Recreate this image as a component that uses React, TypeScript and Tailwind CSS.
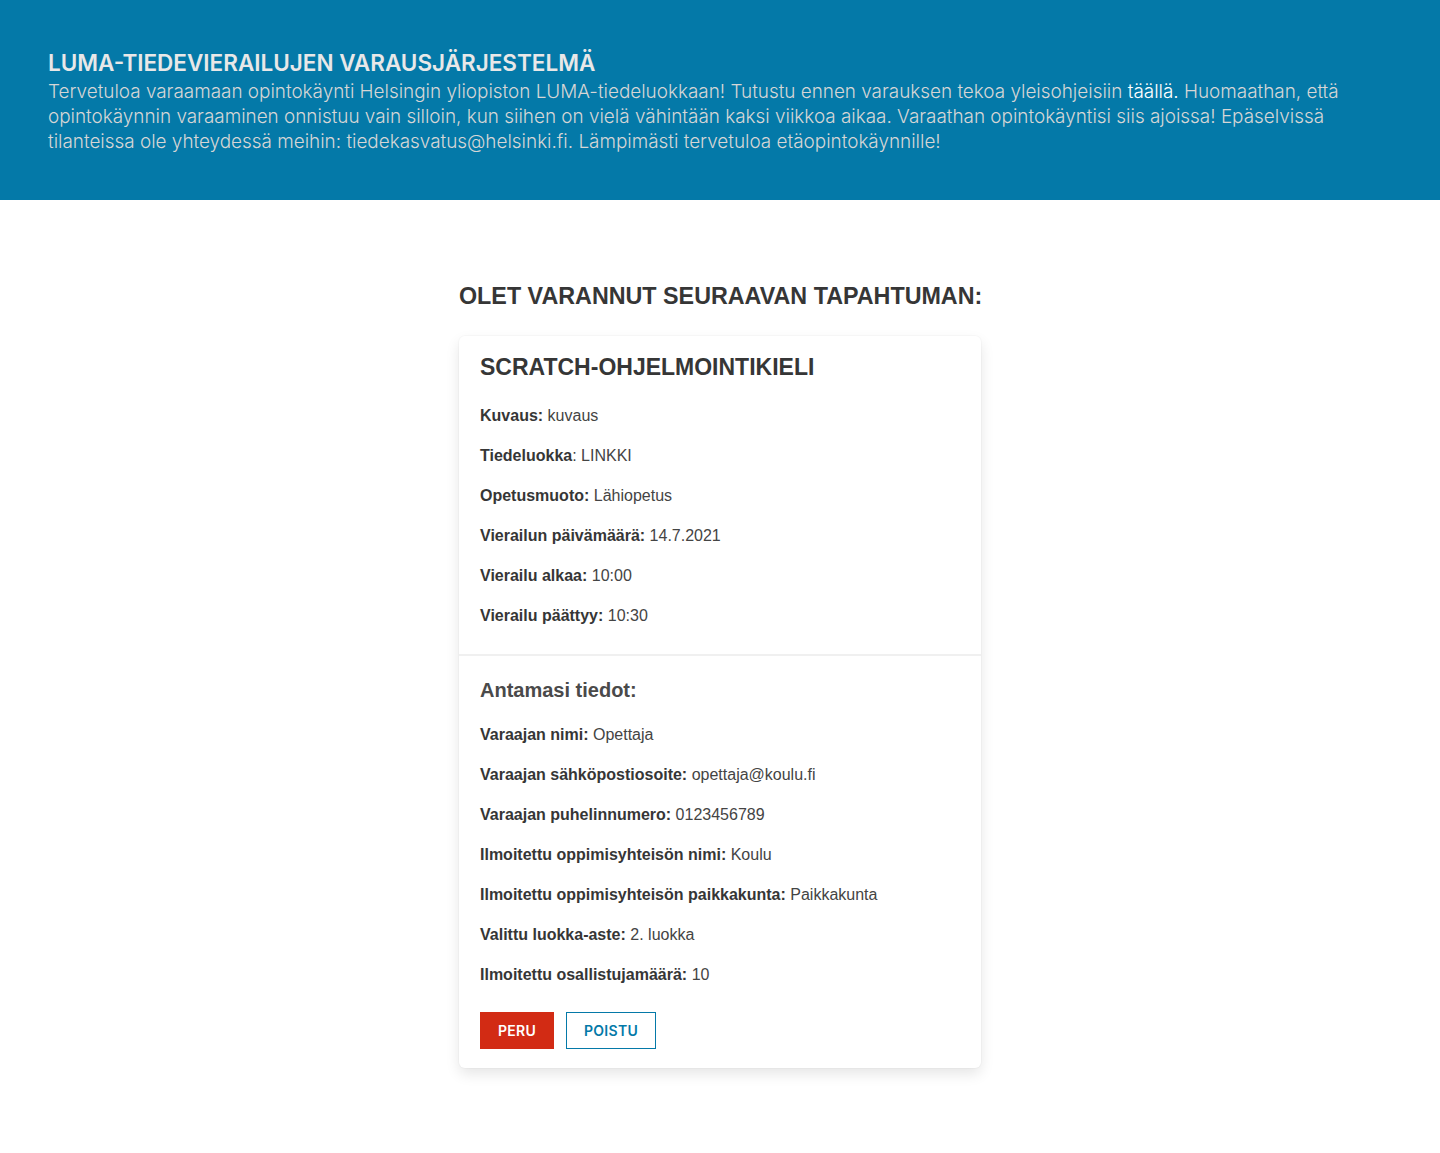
const sans = { fontFamily: '"Liberation Sans", Arial, sans-serif' };

function Row({ label, value, colon = true }: { label: string; value: string; colon?: boolean }) {
  return (
    <p className="h-[24px] text-[16px] leading-[24px] mb-[16px] last:mb-0 text-[#444444]">
      <strong className="font-bold text-[#363636]">{label}{colon ? ":" : ""}</strong>
      {colon ? " " : ": "}
      {value}
    </p>
  );
}

export default function App() {
  return (
    <div className="min-h-[1153px] bg-white" style={{ fontFamily: "Inter, sans-serif" }}>
      <header className="h-[200px] bg-[#0479a8] px-[48px] pt-[48px]">
        <h1 className="text-[22.5px] leading-[29px] font-semibold text-[#e8e8e8]">LUMA-TIEDEVIERAILUJEN VARAUSJÄRJESTELMÄ</h1>
        <p className="mt-[2px] text-[18.9px] leading-[25px] text-[#d6d6d6] font-light max-w-[1320px]">
          Tervetuloa varaamaan opintokäynti Helsingin yliopiston LUMA-tiedeluokkaan! Tutustu ennen varauksen tekoa yleisohjeisiin <span className="text-white">täällä.</span> Huomaathan, että opintokäynnin varaaminen onnistuu vain silloin, kun siihen on vielä vähintään kaksi viikkoa aikaa. Varaathan opintokäyntisi siis ajoissa! Epäselvissä tilanteissa ole yhteydessä meihin: tiedekasvatus@helsinki.fi. Lämpimästi tervetuloa etäopintokäynnille!
        </p>
      </header>

      <main className="mx-auto w-[522px] pt-[82px] pb-[84px]" style={sans}>
        <h2 className="text-[23.3px] leading-[28px] font-bold text-[#363636] mb-[26px] whitespace-nowrap">OLET VARANNUT SEURAAVAN TAPAHTUMAN:</h2>

        <div className="rounded-[6px] bg-white shadow-[0_6px_14px_rgba(0,0,0,0.10),0_0_0_1px_rgba(0,0,0,0.02)]">
          <div className="px-[21px] pt-[18px] pb-[26px] border-b-2 border-[#f0f0f0]">
            <h3 className="text-[23px] leading-[26px] font-bold text-[#363636] mb-[24px]">SCRATCH-OHJELMOINTIKIELI</h3>
            <Row label="Kuvaus" value="kuvaus" />
            <Row label="Tiedeluokka" value="LINKKI" colon={false} />
            <Row label="Opetusmuoto" value="Lähiopetus" />
            <Row label="Vierailun päivämäärä" value="14.7.2021" />
            <Row label="Vierailu alkaa" value="10:00" />
            <Row label="Vierailu päättyy" value="10:30" />
          </div>
          <div className="px-[21px] pt-[22px] pb-[19px]">
            <h4 className="text-[20px] leading-[24px] font-bold text-[#4a4a4a] mb-[21px]">Antamasi tiedot:</h4>
            <Row label="Varaajan nimi" value="Opettaja" />
            <Row label="Varaajan sähköpostiosoite" value="opettaja@koulu.fi" />
            <Row label="Varaajan puhelinnumero" value="0123456789" />
            <Row label="Ilmoitettu oppimisyhteisön nimi" value="Koulu" />
            <Row label="Ilmoitettu oppimisyhteisön paikkakunta" value="Paikkakunta" />
            <Row label="Valittu luokka-aste" value="2. luokka" />
            <Row label="Ilmoitettu osallistujamäärä" value="10" />
            <div className="flex gap-[12px] mt-[25px]" style={{ fontFamily: "Inter, sans-serif" }}>
              <button className="h-[37px] w-[74px] bg-[#d22b14] text-white text-[14px] font-semibold tracking-[0.3px]">PERU</button>
              <button className="h-[37px] w-[90px] border border-[#0479a8] text-[#0479a8] text-[14px] font-semibold tracking-[0.3px]">POISTU</button>
            </div>
          </div>
        </div>
      </main>
    </div>
  );
}
